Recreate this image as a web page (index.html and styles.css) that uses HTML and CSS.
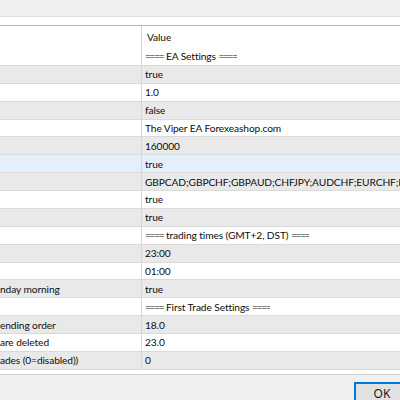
FILE: index.html
```html
<!DOCTYPE html>
<html>
<head>
<meta charset="utf-8">
<link rel="stylesheet" href="styles.css">
</head>
<body>
<div class="dialog">
  <div class="tabbar"></div>
  <div class="strip"></div>
  <div class="list">
    <div class="head"><div class="c1"></div><div class="c2">Value</div></div>
    <div class="row"><div class="c1"></div><div class="c2"><span class="eq">====</span> EA Settings <span class="eq">====</span></div></div>
    <div class="row alt"><div class="c1"></div><div class="c2">true</div></div>
    <div class="row"><div class="c1"></div><div class="c2">1.0</div></div>
    <div class="row alt"><div class="c1"></div><div class="c2">false</div></div>
    <div class="row"><div class="c1"></div><div class="c2">The Viper EA Forexeashop.com</div></div>
    <div class="row alt"><div class="c1"></div><div class="c2">160000</div></div>
    <div class="row hot"><div class="c1"></div><div class="c2">true</div></div>
    <div class="row alt"><div class="c1"></div><div class="c2">GBPCAD;GBPCHF;GBPAUD;CHFJPY;AUDCHF;EURCHF;E</div></div>
    <div class="row"><div class="c1"></div><div class="c2">true</div></div>
    <div class="row alt"><div class="c1"></div><div class="c2">true</div></div>
    <div class="row"><div class="c1"></div><div class="c2"><span class="eq">====</span> trading times (GMT+2, DST) <span class="eq">====</span></div></div>
    <div class="row alt"><div class="c1"></div><div class="c2">23:00</div></div>
    <div class="row"><div class="c1"></div><div class="c2">01:00</div></div>
    <div class="row alt"><div class="c1">nday morning</div><div class="c2">true</div></div>
    <div class="row"><div class="c1"></div><div class="c2"><span class="eq">====</span> First Trade Settings <span class="eq">====</span></div></div>
    <div class="row alt"><div class="c1">ending order</div><div class="c2">18.0</div></div>
    <div class="row"><div class="c1">are deleted</div><div class="c2">23.0</div></div>
    <div class="row alt"><div class="c1">ades (0=disabled))</div><div class="c2">0</div></div>
    <div class="tail"></div>
  </div>
  <div class="footer">
    <button class="ok">OK</button>
  </div>
</div>
</body>
</html>
```
FILE: styles.css
```css
html, body {
  margin: 0;
  padding: 0;
  background: #f0f0f0;
  width: 400px;
  height: 400px;
  overflow: hidden;
}
.dialog {
  font-family: "Lato", "Liberation Sans", sans-serif;
  font-size: 10.2px;
  letter-spacing: -0.1px;
  color: #0d0d0d;
  width: 400px;
}
.tabbar {
  height: 17px;
  background: #f0f0f0;
  border-bottom: 1px solid #e0e0e0;
  box-sizing: border-box;
}
.strip {
  height: 9px;
  background: #ffffff;
  border-bottom: 1px solid #b4b4b4;
  box-sizing: border-box;
}
.list {
  background: #ffffff;
}
.head, .row {
  display: flex;
  white-space: nowrap;
  overflow: hidden;
}
.head {
  height: 22px;
  align-items: center;
}
.row {
  height: 17.875px;
  box-sizing: border-box;
  border-bottom: 1px solid #dadada;
  align-items: center;
}
.row.alt { background: #e9e9e9; }
.row.hot { background: #e3effb; }
.c1 {
  width: 142px;
  flex: none;
  box-sizing: border-box;
  border-right: 1px solid #d6d6d6;
  height: 100%;
  display: flex;
  align-items: center;
  overflow: hidden;
}
.c2 {
  padding-left: 3px;
  overflow: hidden;
}
.head .c2 { padding-left: 5px; }
.eq { letter-spacing: -1.3px; }
.tail {
  height: 4px;
  border-bottom: 1px solid #d0d0d0;
}
.footer {
  display: flex;
  justify-content: flex-end;
  padding-top: 7px;
}
.ok {
  margin: 0;
  width: 46px;
  height: 23px;
  font-family: "Noto Sans", sans-serif;
  font-size: 12px;
  background: #e1e1e1;
  border: 2px solid #0078d7;
  border-right: none;
  color: #1a1a1a;
  padding: 0 0 0 8px;
}
```
